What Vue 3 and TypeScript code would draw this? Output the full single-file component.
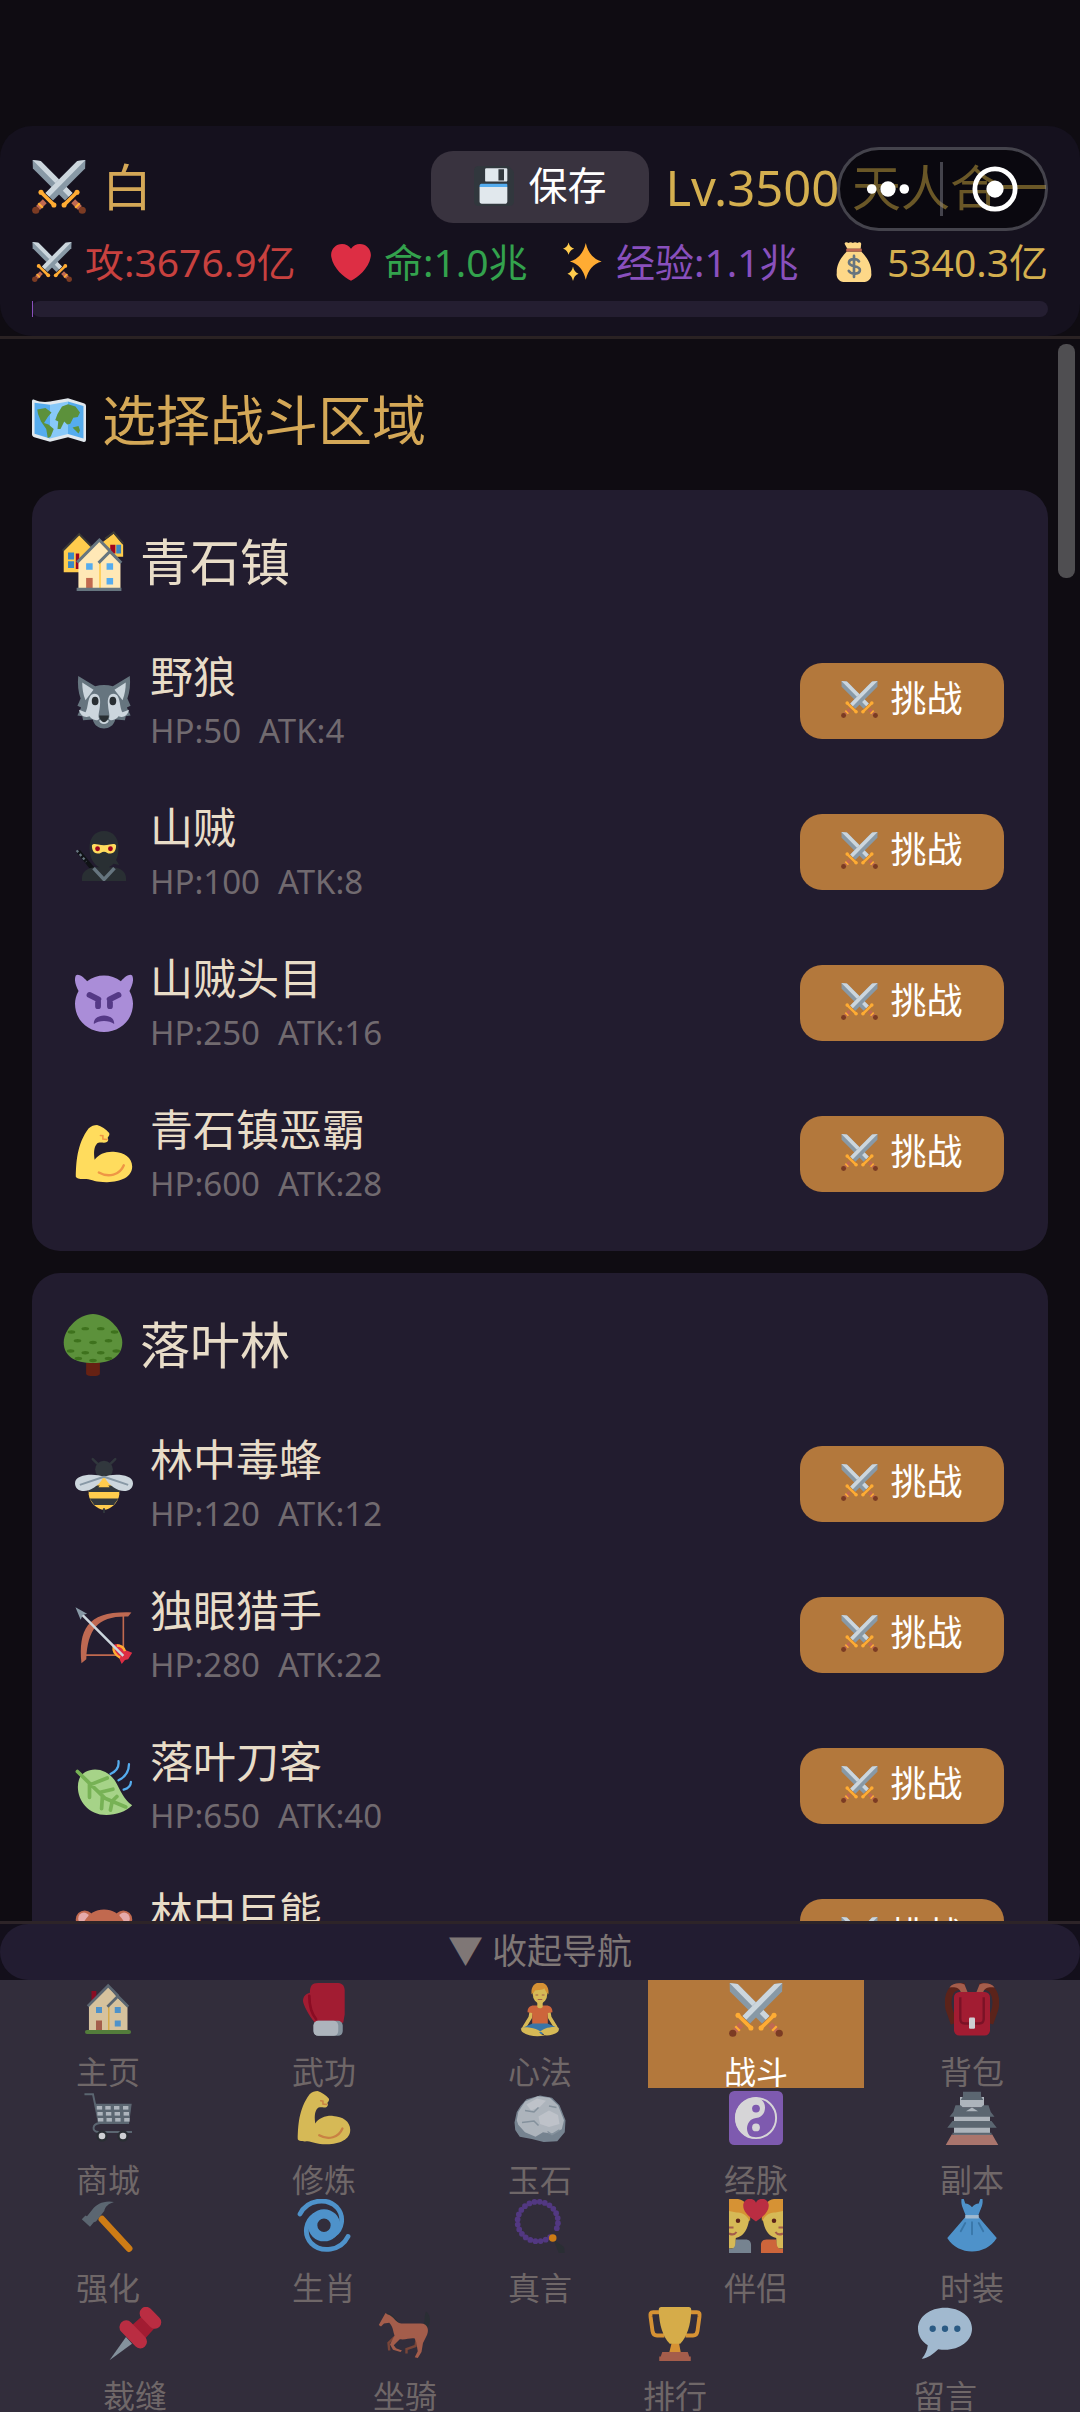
<script setup lang="ts">
import { h } from 'vue'

interface Monster {
  icon: string
  name: string
  hp?: number
  atk?: number
}
interface Area {
  icon: string
  name: string
  monsters: Monster[]
}
interface NavItem {
  icon: string
  label: string
}

const star = (x: number, y: number, rx: number, ry: number, c: string): string =>
  `<path fill="${c}" d="M${x} ${y - ry}Q${x + rx * 0.2} ${y - ry * 0.2} ${x + rx} ${y}Q${x + rx * 0.2} ${y + ry * 0.2} ${x} ${y + ry}Q${x - rx * 0.2} ${y + ry * 0.2} ${x - rx} ${y}Q${x - rx * 0.2} ${y - ry * 0.2} ${x} ${y - ry}z"/>`

const sword =
  '<path fill="#8899a6" d="M35.6 0l-.2 5.600L14 27l-5-5L30.200.600z"/><path fill="#ccd6dd" d="M35.6 0L11.500 24.500 9 22 30.200.600z"/><path stroke="#bf6952" stroke-width="3.600" d="M8.500 27.500L4 32"/><path stroke="#ffac33" stroke-width="1.500" d="M4.200 28.800l3 3"/><path stroke="#ffac33" stroke-width="2.400" stroke-linecap="round" d="M6 21.500l8.800 8.600"/><circle cx="6" cy="21.500" r="1.700" fill="#ffac33"/><circle cx="14.600" cy="30" r="1.700" fill="#ffac33"/><circle cx="2.500" cy="33.500" r="2.400" fill="#7b3b23"/>'

const muscle =
  '<path fill="#ffdc5d" d="M13.700 0c2.800.9 5.500 2.600 7.500 5 .6 1-.4 2.300-1 3 .8.8.4 2-.4 2.600-1.800 1.100-4.600-.5-6.200 1-2 2.200-2 6-1.400 10 2.300-3.500 7-5.300 11.800-5 6.500.3 11.400 3.600 11.500 9.200 0 6.500-7 9.600-15.500 9.700-6.500.1-9.500-1.500-13-2-3 .3-6.500-.2-6.500-1.500C.7 24 1 12 8.400 2.200 9.900.6 12 .1 13.700 0z"/><path fill="none" stroke="#ef9645" stroke-width="1.500" stroke-linecap="round" d="M14.800 29.500c6 3.400 13 1.600 15.500-4.500"/><path fill="none" stroke="#ef9645" stroke-width="1" stroke-linecap="round" d="M15.800 6.500l1.500.2v2l2.500.3"/>'

const houseFront =
  '<path fill="#ffe8b6" d="M5.300 15.500L18 2.200l6.500 7.800 6.500 5.500V32H5.300z"/><path fill="#ffcc4d" d="M18 14h1v18h-1z"/><path fill="none" stroke="#66757f" stroke-width="1.800" d="M4.500 15.500L18.100 1.800l6.700 6.800M17.600 15.800l7-7 6.900 7"/><path fill="#55acee" d="M10 16h4v4h-4zM22.500 16h4v4h-4zM22.500 25h4v4h-4z"/><path fill="#c1694f" d="M10 25h4v7h-4z"/>'

const beads = Array.from({ length: 23 }, (_, i) => {
  const a = ((52 + i * 14.9) * Math.PI) / 180
  return `<circle cx="${16.500 + 13.500 * Math.cos(a)}" cy="${15 + 13.200 * Math.sin(a)}" r="1.900"/>`
}).join('')

const basketHoles = [10, 14, 18]
  .map((y, r) => [10.500, 16.200, 22, 28].map((x) => `<path d="M${x + r * 0.4} ${y}h3.600v2.400h-3.600z"/>`).join(''))
  .join('')

const leaves = [
  [5, 14], [13, 12], [22, 12], [30, 14], [8.500, 19], [17.500, 20], [26.500, 19],
  [4.500, 25], [13, 26], [22, 26], [31, 25], [9, 29.300], [17.500, 30.500], [26.500, 29.300],
]
  .map(([x, y]) => `<ellipse cx="${x}" cy="${y}" rx="2.200" ry="1"/>`)
  .join('')

const art: Record<string, string> = {
  swords: `<g transform="matrix(-1 0 0 1 36 0)">${sword}</g>${sword}`,
  floppy:
    '<path fill="#31373d" d="M4 36s-4 0-4-4V4s0-4 4-4h26c1 0 2 1 2 1l3 3s1 1 1 2v26s0 4-4 4H4z"/><path fill="#55acee" d="M5 19v-1s0-2 2-2h21c2 0 2 0 2 2v1H5z"/><path fill="#e1e8ed" d="M5 32.020V19h25v13s0 2-2 2H7c-2 0-2-1.980-2-1.980zM10 3s0-1 1-1h18c1.050 0 1 1 1 1v10s0 1-1 1H11s-1 0-1-1V3zm12 10h5V3h-5v10z"/>',
  heart:
    '<path fill="#dd2e44" d="M35.900 11.800C35.900 6.300 31.400 1.900 26 1.900c-3.300 0-6.200 1.600-8 4.100-1.800-2.500-4.700-4.100-8-4.100C4.500 1.900.1 6.300.1 11.800c0 .8.100 1.500.3 2.200C1.800 23 11.900 32.600 18 34.800 24.100 32.600 34.200 23 35.600 14c.2-.7.300-1.500.3-2.200z"/>',
  sparkles: star(20.500, 17.500, 14.300, 16.500, '#ffac33') + star(5, 6, 5, 5.500, '#ffcc4d') + star(9, 28.500, 5, 6.500, '#ffcc4d'),
  money:
    '<path fill="#fdd888" d="M11.500 8.500h13c6 6 9.500 13 9 19.500.9 3.500-2 8-6 8H8.500c-4 0-6.900-4.500-6-8-.5-6.500 3-13.500 9-19.500zM12 6L9.500 1.500C10 0 12 0 13 1c1-1 3-1 4 0 1-1 3-1 4 0 1-1 3-1 3.500.5L24 6z"/><path fill="#bf6952" d="M11 6h14v2.600H11z"/><path fill="none" stroke="#67757f" stroke-width="2.400" stroke-linecap="round" d="M22.500 17.500c-2-3.300-9-2.700-9 1 0 4.500 9.800 2.200 9.800 6.700 0 4-7.700 4.500-10 .8M18 12.500v19"/>',
  map: '<path fill="#e1e8ed" d="M1.500 4.500c3.500 1.500 7 1.700 10.500 1.200L24 3.500l10.500 3.300c1 .3 1.500 1 1.500 2V31c0 1.500-1 2-2 1.500L24 29.500l-12 3-10.500-3C.5 29 0 28.500 0 27.500V5.500c0-1 .7-1.400 1.500-1z"/><path fill="#55acee" d="M1.700 6.500L12 7.800v22.500L1.700 27.200zM24 5.600l10.300 3v21.800L24 27.300z"/><path fill="#88c9f9" d="M12 7.800l12-2.200v21.700l-12 3z"/><path fill="#5c913b" d="M3.500 11l5.500-1 4 3-2.500 3-2.500 4 3 1 3.500 3-2 5-2 1-1-6-3.500-5-2-5zM17 14l3-5 4-1.500 5 1.500 3 4-1.500 3-3 .5-2 4-2 .5-2-2-2.500 5h-2l.5-5-2-1zM27 23l4-1 1 3-1 2z"/>',
  houses:
    '<path fill="#ffcc4d" d="M1 11l9-9 8 8v14H1zM23 7l7-5.500L35.500 8v7H26z"/><path fill="none" stroke="#3b3a36" stroke-width="1.200" d="M.4 11.500L10 1.800l7 7M25 4.500L30 .8l5.500 6.500"/><path fill="#3b88c3" d="M3.500 12.500H7v4H3.500zM3.500 17.500H7v4H3.500zM31.500 8h2.800v5h-2.800z"/><path fill="#a0041e" d="M8 13h2v9H8zM28 8h3v5h-3z"/><g transform="translate(4.500 3.500) scale(.950)">' +
    houseFront +
    '</g><path fill="#66757f" d="M8.500 33h26v1.800h-26z"/>',
  home:
    '<path fill="#a0041e" d="M7 5.300h3.200v7H7z"/>' + houseFront + '<path fill="#5c913b" d="M4 31.300h28a1.300 1.300 0 0 1 0 2.700H4a1.300 1.300 0 0 1 0-2.700z"/>',
  wolf:
    '<path fill="#66757f" d="M2 2.500l10.500 6.300c3.500-1 7.500-1 11 0L34 2.500c.5 5 0 10-1.500 14l2 4.500-2.300 1 2.300 5-3 .4L31 30l-6-.5c-1 4-4 5.500-7 5.500s-6-1.500-7-5.500L5 30l-.5-2.600L1.500 27l2.300-5-2.300-1 2-4.500C2 12.500 1.500 7.500 2 2.500z"/><path fill="#ccd6dd" d="M4.500 6.500l7 4.500-5 6.500c-1.500-4-2-7-2-11zM31.500 6.500l-7 4.500 5 6.500c1.500-4 2-7 2-11zM12 13.500c3 0 4 3 3.500 7-.2 4-1.500 6.500-.5 8.500-1 2-5 .5-6-1.500-2.500 1.200-5.500.2-6.500-4l4 1.500c2-2.500 1-11.500 5.500-11.500zM24 13.500c-3 0-4 3-3.500 7 .2 4 1.500 6.500.5 8.500 1 2 5 .5 6-1.500 2.500 1.200 5.500.2 6.500-4l-4 1.500c-2-2.500-1-11.500-5.500-11.500zM15 30h6c0 3-6 3-6 0z"/><ellipse cx="12.500" cy="18" rx="2.100" ry="2.700" fill="#292f33"/><ellipse cx="23.500" cy="18" rx="2.100" ry="2.700" fill="#292f33"/><path fill="#292f33" d="M15 27h6c0 2-1.700 4.200-3 4.200S15 29 15 27z"/>',
  ninja:
    '<path stroke="#101216" stroke-width="2.600" d="M2 17.500l9 11"/><path stroke="#66757f" stroke-width="1.400" stroke-dasharray="1.500 1.500" d="M1 17l6 7"/><path fill="#292f33" d="M4.300 36v-1.500C4.300 30 8 28 12 27.500h12c4 .5 7.700 2.500 7.700 7V36zM18 5c5.500 0 9 4 9 10.500 0 3-.5 5.500-1.500 7.500l2 3-3.500-.7C22 27.300 20 28 18 28c-5 0-9-5-9-12.500C9 9 12.500 5 18 5z"/><path fill="#ffdc5d" d="M10.500 14c0-1.200 2-1.200 4-.7 2 .6 5 .6 7 0 2-.5 4-.5 4 .7 0 2.500-.8 5-3.500 5-2 0-2.500-1.200-4-1.200s-2 1.200-4 1.200c-2.700 0-3.500-2.500-3.500-5z"/><circle cx="14" cy="16" r="1.500" fill="#a0041e"/><circle cx="22" cy="16" r="1.500" fill="#a0041e"/><path fill="none" stroke="#66757f" stroke-width="2.200" d="M11.500 28l6.500 7 6.500-7"/>',
  devil:
    '<path fill="#aa8dd8" d="M.5 1C1.800-.5 5 1.500 7.500 4.500c6-4.700 15-4.700 21 0C31 1.500 34.200-.5 35.500 1c1.200 2.500.2 6-1.700 9.500C35.300 13 36 16 36 18.500 36 28.500 28 36 18 36S0 28.500 0 18.500c0-2.500.7-5.500 2.200-8C.3 7-.7 3.500.5 1z"/><g fill="none" stroke="#553986" stroke-width="3.600" stroke-linecap="round"><path d="M9 13l5.500 2.700M14.300 17v3M27 13l-5.500 2.700M21.700 17v3"/></g><path fill="#553986" d="M11.700 31c-.5-7 13.100-7 12.600 0-3-2.500-9.600-2.500-12.600 0z"/>',
  muscle,
  tree:
    '<path fill="#662113" d="M14 28h8v6.500c0 1-1.500 1.500-4 1.500s-4-.5-4-1.500z"/><path fill="#5c913b" d="M18 0c8 0 17 8.500 17 16.500C35 24 29 28.500 18 28.500S1 24 1 16.500C1 8.500 10 0 18 0z"/><g fill="#3e721d" transform="translate(.500 -3.500)">' + leaves + '</g>',
  bee:
    '<path fill="none" stroke="#31373d" stroke-width="1.500" stroke-linecap="round" d="M11 2.500l4 4M25 2.500l-4 4"/><circle cx="18" cy="9" r="5.500" fill="#31373d"/><path fill="#ffcc4d" d="M18 14c6 1 10 5 9.500 10.500C27 29.500 22 34 18 34S9 29.500 8.500 24.500C8 19 12 15 18 14z"/><path fill="#31373d" d="M9.500 19h17l1.200 4H8.300zM9 27h18l-3 4H12zM17.400 33h1.200v3h-1.200z"/><path fill="#ffcc4d" d="M18 15l3.500 5h-7z"/><path fill="#ccd6dd" d="M17.800 13.500C13 11.500 0 11.500 0 17.500c0 7 12 7 17.800-4zM18.200 13.500C23 11.500 36 11.500 36 17.500c0 7-12 7-17.800-4z"/><path fill="none" stroke="#8899a6" stroke-width="1.200" d="M18 13.500L3 18.500M18 13.500l15 5"/>',
  bow:
    '<path fill="none" stroke="#c1694f" stroke-width="1" d="M30 5v23M4 30.500h23"/><path fill="#bf6952" d="M35 4l-2 2.500C14 6 8 14 7 33l-3 2.500C2 14 8 3 35 4z"/><path fill="#dd2e44" d="M24 24c3-1 5 0 6.500 3l5 2-2.500 4-2 .5-2 2.500-2-4.500c-3-2-3.500-4.500-3-7.500z"/><path stroke="#ffac33" stroke-width="1.500" d="M24 25c-.5 3 1 5.500 4 7M26 24.500c3 0 4.500 2 5 3.500" fill="none"/><path stroke="#ccd6dd" stroke-width="1.600" d="M3 4l27 27"/><path fill="#8899a6" d="M.3.800l7.200 4-2.700.8L3.500 8.500z"/>',
  leaf:
    '<path fill="#a6d388" d="M2.500 14c3-8 16-9 22.500 1 3.500 6 5 11 10.500 15-4 4-10 6-16 6C6 36-.5 23 2.500 14z"/><path fill="none" stroke="#77b255" stroke-width="2.300" stroke-linecap="round" d="M1.500 9l17 16.500 13 5.500M10 17l10-4M15 22l8.500-2M9 16.500v8.500M17 24.500l-.5 7.500M23 27.500l3-3M23 28l-1 5"/><path fill="none" stroke="#55acee" stroke-width="1.400" stroke-linecap="round" d="M27 2.500c.5 4-1.500 6.500-5 8M33.500 4.500c0 4.500-2.500 8-6.500 10M34.700 15.500c0 2-1.700 4-4.500 4.800"/>',
  bear:
    '<circle cx="6" cy="7" r="5.500" fill="#c1694f"/><circle cx="30" cy="7" r="5.500" fill="#c1694f"/><ellipse cx="5.500" cy="6.500" rx="3.500" ry="3.700" fill="#e6aaaa"/><ellipse cx="30.500" cy="6.500" rx="3.500" ry="3.700" fill="#e6aaaa"/><path fill="#c1694f" d="M18 1c9 0 15 8 15 18s-6 16-15 16S3 29 3 19 9 1 18 1z"/><circle cx="12" cy="16" r="2" fill="#292f33"/><circle cx="24" cy="16" r="2" fill="#292f33"/><ellipse cx="18" cy="26" rx="7" ry="6" fill="#d99e82"/><ellipse cx="18" cy="23.500" rx="3" ry="2" fill="#292f33"/>',
  glove:
    '<path fill="#be1931" d="M14 0h13.500c3 0 4.300 2.500 4.300 5v16l-1 5.500H12C8 22 4 14 4 12c0-3 2-5 4.600-5.500C8.600 2 10 0 14 0z"/><path fill="none" stroke="#a0041e" stroke-width="1.800" stroke-linecap="round" d="M8.200 8.500c0 7 2 12.500 4.500 15.500"/><rect x="11" y="25.200" width="19.500" height="10" rx="3.200" fill="#99aab5"/><rect x="11" y="25.200" width="16.500" height="10" rx="3.200" fill="#ccd6dd"/>',
  yoga:
    '<path fill="none" stroke="#ffdc5d" stroke-width="2.400" stroke-linecap="round" stroke-linejoin="round" d="M12.500 17.500L11.500 23 7.500 29.500M23.500 17.500l1 5.500 4 6.500"/><path fill="#f4743b" d="M14 15h8c3 0 4.300 1.500 4.300 4.500l-3.100.5v8H12.800v-8l-3.100-.5c0-3 1.300-4.500 4.300-4.500z"/><path fill="#3b88c3" d="M13 27h10l8 3.500-5 3.500H10l-5-3.500z"/><path fill="#ffdc5d" d="M6 29.500c6-.5 13 1.500 15 5.500-5 1-11 .5-15-2.500-.8-1-.8-2.300 0-3zM30 29.500c-6-.5-10 1-12.500 3.500 2 3 9 2.500 12.500-.5.8-1 .8-2.300 0-3z"/><path fill="#ffdc5d" d="M16.200 12h3.600v4c-1 1.200-2.600 1.200-3.600 0z"/><ellipse cx="18" cy="7.500" rx="4.800" ry="6.200" fill="#ffdc5d"/><path fill="#ffac33" d="M12.400 7.500C11.800 2.500 14.300-.3 18-.3s6.200 2.800 5.600 7.800c-1.500-1-2-2.500-2.600-4-1.800 1.500-5 1-6.300 1.500-.4.700-.8 1.700-2.300 2.500z"/><path fill="none" stroke="#c1694f" stroke-width=".8" d="M15 8h1.800M19.200 8H21M16.500 11h3"/>',
  backpack:
    '<path fill="none" stroke="#662113" stroke-width="4.500" d="M13 2.500C4 1 1 8 2.500 17L6 27M23 2.500c9-1.500 12 5.500 10.500 14.500L30 27"/><path fill="#c1694f" d="M3 3C5 0 10-.5 13 1l2 5h-4.500c-1-3-4-3.500-7.500-3zM33 3c-2-3-7-3.500-10-2l-2 5h4.500c1-3 4-3.500 7.500-3z"/><rect x="6" y="6" width="24" height="29" rx="3.500" fill="#be1931"/><path fill="none" stroke="#8c0c22" stroke-width="1.600" d="M10.200 9.500V24c0 2 1 3 3 3h9.600c2 0 3-1 3-3V9.500"/><rect x="16" y="23" width="4" height="7.500" rx=".8" fill="#f5f8fa"/>',
  cart:
    '<path fill="none" stroke="#66757f" stroke-width="1.300" d="M2.300 2.200H8L12 21.500c-4.500.5-5 5.700-.5 5.800H34"/><path fill="#66757f" d="M9.300 8.500h24.500L32 22H11.800z"/><g fill="#ccd6dd">' + basketHoles + '</g><circle cx="14" cy="30" r="3.800" fill="#292f33"/><circle cx="28" cy="30" r="3.800" fill="#292f33"/><circle cx="14" cy="30" r="2.200" fill="#f5f8fa"/><circle cx="28" cy="30" r="2.200" fill="#f5f8fa"/>',
  rock:
    '<path fill="#8899a6" d="M1 21l1.500-7L5 10l4-4.500L18 3l8 1.500 5 5 4 10-.5 8-5 6-9 .5-8-2-8-1.500-3-4.500z"/><path fill="#ccd6dd" d="M3.500 14L8 7l8.500-3.500 8 1 5.500 5L34 19.500l-1.500 6-6.500 3-6-1-5 3-7-3-4.500-5-1-3z"/><path fill="#e1e8ed" d="M9 9l7-4 6 1.500-4 4-6 2.500zM17 17l7-4 6 3 1 6-7 2-6-2z"/><path fill="none" stroke="#99aab5" stroke-width="1" d="M8 13l6 1 3-3M6 21l8-1 3 3M24 10l5 1M23 27l3 2 5-3"/>',
  yinyang:
    '<rect width="36" height="36" rx="3.500" fill="#9266cc"/><circle cx="18" cy="18" r="13.400" fill="none" stroke="#fff" stroke-width="1.300"/><path fill="#fff" d="M18 4.200a13.800 13.800 0 0 0 0 27.600c-8-.5-8-13 0-13.800 8-.5 8-13 0-13.800z"/><circle cx="18" cy="11.700" r="2.600" fill="#9266cc"/><circle cx="18" cy="24.300" r="2.600" fill="#fff"/>',
  castle:
    '<path fill="#c9887a" d="M4.500 29h27l4 7H.5z"/><path fill="#ccd6dd" d="M10 4h16v7H10zM6 16h24v13H6z"/><path fill="#66757f" d="M12 .5h12v3l1.500 2.500h-15L12 3.500zM7 9.500h3.500l1.500 1.500h12l1.500-1.500H29l1.500 4.500 2.500 3.200H3L5.500 14zM5 20h26l3.500 4.500h-33zM5 27.800h26v1.400H5z"/><path fill="#ccd6dd" d="M14 13.500l4-2.500 4 2.500z"/>',
  hammer:
    '<path stroke="#f4900c" stroke-width="4.600" stroke-linecap="round" d="M14 13.500l18 19.500"/><path fill="#66757f" d="M.5 13.500L3 11l1 .5 4-5C10 3.500 16 .5 22 2c-3.500 1-6 3-6.500 6L10 15l-1.500.5L6 18.500z"/>',
  cyclone:
    '<circle cx="18" cy="17.500" r="7.600" fill="none" stroke="#55acee" stroke-width="6.300"/><path fill="none" stroke="#55acee" stroke-width="3.200" stroke-linecap="round" d="M2 10C7 0 20-1 26.500 5.500c5.500 6 3.500 15-2 18.500M34 25C29 35 16 36 9.500 29.500 4 23.500 6 14.500 11.500 11"/>',
  beads:
    '<g fill="#5b3b94">' + beads + '</g><path fill="#292f33" d="M27 27l7 5 .5 4h-4z"/><circle cx="26.500" cy="26" r="2.500" fill="#f4900c"/>',
  couple:
    '<path fill="#ffdc5d" d="M0 3h9c4 3 5.500 8 4 13-1.500 6-4 9-8.500 10V33H0zM36 3h-9c-4 3-5.500 8-4 13 1.500 6 4 9 8.500 10V33H36z"/><path fill="#ffac33" d="M0 0h6c6 1 9 7 8 15C12 11 9 8.500 5 9L0 8zM36 0h-6c-6 1-9 7-8 15 2-4 5-6.500 9-6l5-1z"/><circle cx="6" cy="14.500" r="1.500" fill="#662113"/><circle cx="30" cy="14.500" r="1.500" fill="#662113"/><path fill="none" stroke="#c1694f" stroke-width="1.400" d="M0 19h3M0 23c2 1 4 .5 5-1M36 19h-3M36 23c-2 1-4 .5-5-1"/><path fill="#8899a6" d="M0 33c3 1 4.500-1 4.500-6H11c2.500 0 3.700 1.500 3.700 3.500V36H0z"/><path fill="#f4743b" d="M36 33c-3 1-4.500-1-4.500-6H25c-2.500 0-3.700 1.500-3.700 3.500V36H36z"/><path fill="#dd2e44" d="M18 15C12 11 9.500 8 9.500 4.500c0-5.500 7-6 8.500-2 1.500-4 8.500-3.500 8.500 2C26.500 8 24 11 18 15z"/>',
  dress:
    '<path fill="#55acee" d="M11 0h1.500l1 3c1.500 0 3.500 1 4.500 2.500C19 4 21 3 22.500 3l1-3H25c.5 4-1 6-3 11.500L34.500 26C27 38 9 38 1.500 26L14 11.500C12 6 10.500 4 11 0z"/><path fill="#bbddf5" d="M13.500 10.700h9v2.300h-9z"/><path fill="none" stroke="#3b88c3" stroke-width="1.200" stroke-linecap="round" d="M13.500 16l-3 5.500M18 15.500v8M22.500 16l3 5.500"/>',
  pin: '<path fill="#99aab5" d="M12 20l4 4.500L1 35.500z"/><path fill="#be1931" d="M15 13l9-8 8 8-9 10z"/><rect x="20" y="3" width="17" height="8.600" rx="4.300" transform="rotate(46 28.500 7)" fill="#dd2e44"/><rect x="5.500" y="13.700" width="22.500" height="9" rx="4.500" transform="rotate(46 16.700 18.300)" fill="#dd2e44"/>',
  horse:
    '<path fill="#292f33" d="M30 12c2-3 .5-6 2-9 3 2 3.500 7 1 11z"/><path fill="none" stroke="#292f33" stroke-width="1.500" d="M6 4.500c4 1 5 4 7.500 6.500"/><path fill="none" stroke="#8a4b38" stroke-width="1.600" d="M11 20l-4 4 .5 5M26 20l-1 6-6 2v3"/><path fill="#c1694f" d="M5 4l1.500 1c4 1 5 5.500 9 6h13c5 0 6 5 3.500 9l-2 4-1 6-2.500 4-2-.5 2-4-1-6-1-2.500c-3-.5-6 1-10 .5l-4 4 1.500 2 4 1.500-1 1-5-1.500-2-3.500 3-6c-1-3-1-6-3.500-8.500L4 11l-2 2L.5 12z"/>',
  trophy:
    '<path fill="none" stroke="#ffac33" stroke-width="2.600" d="M8 3.500H3.500c-2 0-2 1-1.800 3L3 16c.3 2 1 3 3 3h5M28 3.500h4.500c2 0 2 1 1.800 3L33 16c-.3 2-1 3-3 3h-5"/><path fill="#ffac33" d="M16 23h4.500l1.500 8h-8z"/><path fill="#ffcc4d" d="M9 0h18c1.500 0 2 1 1.800 2.500C28.500 12 26 20 21.500 24.500h-7C10 20 7.500 12 7.200 2.500 7 1 7.500 0 9 0z"/><path fill="#c1694f" d="M9.500 30h17l1 3h1v3h-21v-3h1z"/>',
  speech:
    '<path fill="#bdddf4" d="M18 .500c10 0 18 6 18 14s-8 14-18 14c-1.500 0-3-.1-4.500-.4C10 31.500 6.500 34 2.500 34.500c2.500-3 3.700-6 4-9C2.500 23 0 19 0 14.500c0-8 8-14 18-14z"/><g fill="#2a6797"><circle cx="9.800" cy="14.500" r="2.100"/><circle cx="18" cy="14.500" r="2.100"/><circle cx="26.200" cy="14.500" r="2.100"/></g>',
}

const Emoji = (props: { name: string }) =>
  h('svg', { viewBox: '0 0 36 36', class: 'emoji', 'aria-hidden': 'true', innerHTML: art[props.name] })
Emoji.props = ['name']

const stats = [
  { icon: 'swords', text: '攻:3676.9亿', tone: 'red' },
  { icon: 'heart', text: '命:1.0兆', tone: 'green' },
  { icon: 'sparkles', text: '经验:1.1兆', tone: 'purple' },
  { icon: 'money', text: '5340.3亿', tone: 'gold' },
]

const areas: Area[] = [
  {
    icon: 'houses',
    name: '青石镇',
    monsters: [
      { icon: 'wolf', name: '野狼', hp: 50, atk: 4 },
      { icon: 'ninja', name: '山贼', hp: 100, atk: 8 },
      { icon: 'devil', name: '山贼头目', hp: 250, atk: 16 },
      { icon: 'muscle', name: '青石镇恶霸', hp: 600, atk: 28 },
    ],
  },
  {
    icon: 'tree',
    name: '落叶林',
    monsters: [
      { icon: 'bee', name: '林中毒蜂', hp: 120, atk: 12 },
      { icon: 'bow', name: '独眼猎手', hp: 280, atk: 22 },
      { icon: 'leaf', name: '落叶刀客', hp: 650, atk: 40 },
      { icon: 'bear', name: '林中巨熊' },
    ],
  },
]

const navRows: NavItem[][] = [
  [
    { icon: 'home', label: '主页' },
    { icon: 'glove', label: '武功' },
    { icon: 'yoga', label: '心法' },
    { icon: 'swords', label: '战斗' },
    { icon: 'backpack', label: '背包' },
  ],
  [
    { icon: 'cart', label: '商城' },
    { icon: 'muscle', label: '修炼' },
    { icon: 'rock', label: '玉石' },
    { icon: 'yinyang', label: '经脉' },
    { icon: 'castle', label: '副本' },
  ],
  [
    { icon: 'hammer', label: '强化' },
    { icon: 'cyclone', label: '生肖' },
    { icon: 'beads', label: '真言' },
    { icon: 'couple', label: '伴侣' },
    { icon: 'dress', label: '时装' },
  ],
  [
    { icon: 'pin', label: '裁缝' },
    { icon: 'horse', label: '坐骑' },
    { icon: 'trophy', label: '排行' },
    { icon: 'speech', label: '留言' },
  ],
]
const activeLabel = '战斗'
const expPercent = 0.1
</script>

<template>
  <div class="app">
    <header class="header">
      <div class="header-panel">
        <div class="player">
          <div class="player-name"><Emoji name="swords" /><span>白</span></div>
          <button type="button" class="save"><Emoji name="floppy" /><span>保存</span></button>
          <span class="level">Lv.3500 天人合一</span>
          <div class="capsule">
            <button type="button" class="capsule-btn" aria-label="更多">
              <svg viewBox="0 0 48 48" fill="#fff"><circle cx="7" cy="24" r="5" /><circle cx="24" cy="24" r="8" /><circle cx="41" cy="24" r="5" /></svg>
            </button>
            <i class="capsule-line"></i>
            <button type="button" class="capsule-btn" aria-label="关闭">
              <svg viewBox="0 0 48 48"><circle cx="24" cy="24" r="21" fill="none" stroke="#fff" stroke-width="5" /><circle cx="24" cy="24" r="9" fill="#fff" /></svg>
            </button>
          </div>
        </div>
        <div class="stats">
          <div v-for="s in stats" :key="s.text" class="stat" :class="s.tone">
            <Emoji :name="s.icon" /><span>{{ s.text }}</span>
          </div>
        </div>
        <div class="exp"><div class="exp-fill" :style="{ width: expPercent + '%' }"></div></div>
      </div>
    </header>

    <main class="content">
      <h1 class="title"><Emoji name="map" /><span>选择战斗区域</span></h1>
      <section v-for="area in areas" :key="area.name" class="card">
        <h2 class="area"><Emoji :name="area.icon" /><span>{{ area.name }}</span></h2>
        <div v-for="m in area.monsters" :key="m.name" class="monster">
          <Emoji :name="m.icon" />
          <div class="info">
            <div class="name">{{ m.name }}</div>
            <div class="attrs">
              <span v-if="m.hp">HP:{{ m.hp }}</span>
              <span v-if="m.atk">ATK:{{ m.atk }}</span>
            </div>
          </div>
          <button type="button" class="fight"><Emoji name="swords" /><span>挑战</span></button>
        </div>
      </section>
      <div class="thumb"></div>
    </main>

    <footer class="footer">
      <button type="button" class="toggle">▼ 收起导航</button>
      <nav class="nav">
        <div v-for="(row, i) in navRows" :key="i" class="nav-row">
          <button
            v-for="item in row"
            :key="item.label"
            type="button"
            class="nav-item"
            :class="{ active: item.label === activeLabel }"
          >
            <Emoji :name="item.icon" /><span>{{ item.label }}</span>
          </button>
        </div>
      </nav>
    </footer>
  </div>
</template>

<style>
body {
  margin: 0;
  background: #0f0c12;
}
</style>

<style scoped>
.app {
  display: flex;
  flex-direction: column;
  height: 100vh;
  box-sizing: border-box;
  padding-top: 126px;
  background: #0f0c12;
  color: #e8dcc8;
  font-family: "Noto Sans", "Noto Sans CJK SC", sans-serif;
  font-weight: 400;
}
button {
  border: 0;
  padding: 0;
  font: inherit;
  color: inherit;
  background: none;
}
h1,
h2 {
  margin: 0;
  font-weight: 400;
}
.emoji {
  display: block;
  flex: none;
  width: 54px;
  height: 54px;
}
.header {
  flex: none;
  border-bottom: 3px solid #2a2223;
}
.header-panel {
  padding: 25px 32px 19px;
  border-radius: 32px;
  background: #15111e;
}
.player {
  position: relative;
  display: flex;
  align-items: center;
  height: 72px;
}
.player-name {
  display: flex;
  align-items: center;
  gap: 16px;
  flex: 1;
  font-size: 50px;
  line-height: 68px;
  color: #d4a857;
}
.save {
  display: flex;
  align-items: center;
  justify-content: center;
  gap: 14px;
  box-sizing: border-box;
  width: 218px;
  height: 72px;
  margin-right: 16px;
  padding-bottom: 2px;
  border-radius: 22px;
  background: #39333f;
  color: #fff;
  font-size: 39px;
  line-height: 50px;
}
.save span,
.fight span {
  padding-bottom: 2px;
}
.save .emoji,
.stat .emoji {
  width: 40px;
  height: 40px;
}
.level {
  font-size: 49px;
  line-height: 68px;
  color: #d4af4f;
  white-space: nowrap;
}
.capsule {
  position: absolute;
  top: -4px;
  right: 0;
  display: flex;
  align-items: center;
  justify-content: space-between;
  box-sizing: border-box;
  width: 211px;
  height: 84px;
  padding: 0 27px 0 25px;
  border: 3px solid rgba(140, 140, 150, 0.45);
  border-radius: 42px;
  background: rgba(0, 0, 0, 0.5);
}
.capsule-btn svg {
  display: block;
  width: 46px;
  height: 46px;
}
.capsule-line {
  width: 3px;
  height: 54px;
  background: rgba(140, 140, 150, 0.45);
}
.stats {
  display: flex;
  justify-content: space-between;
  margin-top: 12px;
  font-size: 39px;
  line-height: 54px;
}
.stat {
  display: flex;
  align-items: center;
  gap: 13px;
  white-space: nowrap;
}
.red { color: #c8413f; }
.green { color: #33a24d; }
.purple { color: #8950bd; }
.gold { color: #d4af4f; }
.exp {
  height: 16px;
  margin-top: 12px;
  border-radius: 8px;
  background: #241e31;
}
.exp-fill {
  height: 100%;
  background: #8950bd;
}
.content {
  position: relative;
  flex: 1;
  min-height: 0;
  overflow: hidden;
  padding: 0 32px;
}
.title {
  display: flex;
  align-items: center;
  gap: 16px;
  box-sizing: border-box;
  height: 151px;
  padding-top: 11px;
  font-size: 54px;
  line-height: 78px;
  color: #d4a857;
}
.card {
  margin-bottom: 22px;
  padding: 27px 30px 22px;
  border-radius: 28px;
  background: #221c2f;
}
.area {
  display: flex;
  align-items: center;
  gap: 16px;
  margin-bottom: 18px;
  font-size: 50px;
  line-height: 90px;
}
.area .emoji {
  width: 62px;
  height: 62px;
}
.monster {
  display: flex;
  align-items: center;
  gap: 17px;
  padding: 22px 14px 22px 13px;
}
.monster > .emoji {
  width: 58px;
  height: 58px;
}
.info {
  flex: 1;
}
.name {
  font-size: 43px;
  line-height: 60px;
}
.attrs {
  display: flex;
  gap: 18px;
  height: 47px;
  font-size: 33px;
  line-height: 47px;
  color: #716a6f;
}
.fight {
  display: flex;
  align-items: center;
  justify-content: center;
  gap: 12px;
  box-sizing: border-box;
  width: 204px;
  height: 76px;
  padding-bottom: 2px;
  border-radius: 22px;
  background: #b3783c;
  color: #fff;
  font-size: 36px;
  line-height: 48px;
}
.fight .emoji {
  width: 37px;
  height: 37px;
}
.thumb {
  position: absolute;
  top: 5px;
  right: 5px;
  width: 17px;
  height: 234px;
  border-radius: 8px;
  background: #4f4e51;
}
.footer {
  flex: none;
  border-top: 3px solid #2d2428;
  background: #130f1b;
}
.toggle {
  display: block;
  width: 100%;
  height: 56px;
  padding-bottom: 3px;
  border-radius: 28px;
  background: #221c31;
  color: #7f7776;
  font-size: 35px;
  line-height: 50px;
}
.nav {
  background: #322d3b;
}
.nav-row {
  display: flex;
}
.nav-item {
  display: flex;
  flex: 1;
  flex-direction: column;
  align-items: center;
  gap: 18px;
  height: 108px;
  padding-top: 3px;
  font-size: 32px;
  line-height: 33px;
  color: #6f6768;
}
.nav-item .emoji {
  opacity: 0.8;
}
.nav-item.active {
  background: #b3783c;
  color: #fff;
}
.nav-item.active .emoji {
  opacity: 1;
}
</style>
